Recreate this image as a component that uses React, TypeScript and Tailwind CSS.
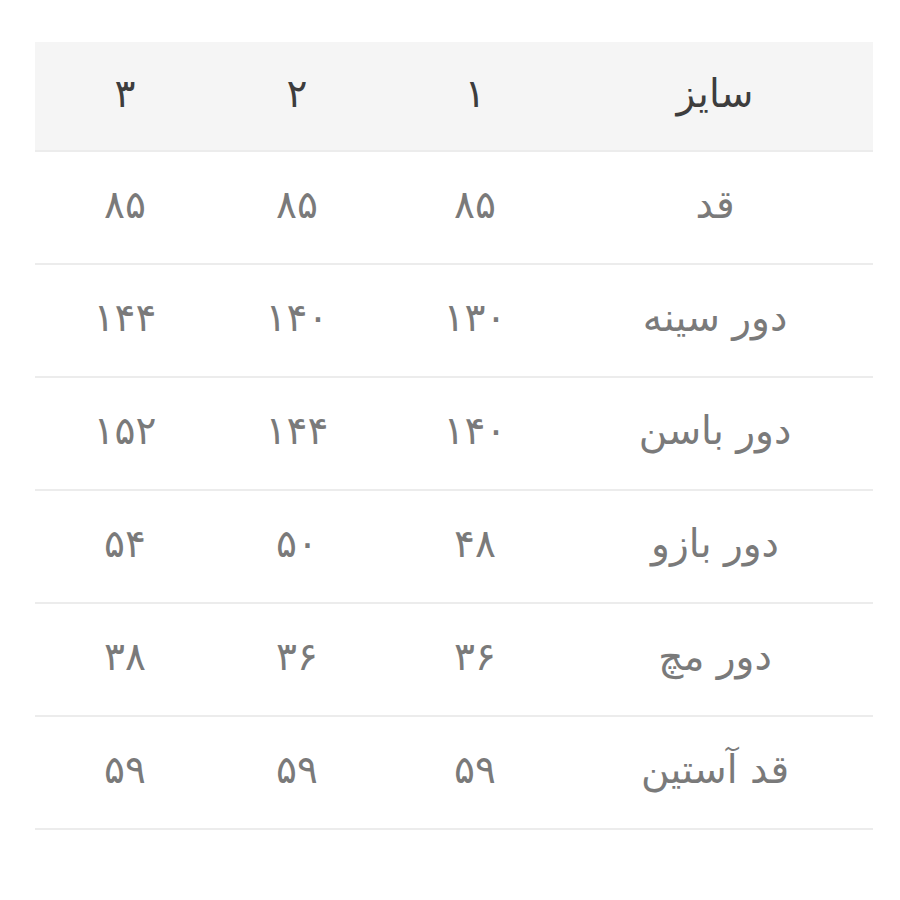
import React from 'react';

const cols = ['۱', '۲', '۳'];

const rows = [
  { label: 'قد', values: ['۸۵', '۸۵', '۸۵'] },
  { label: 'دور سینه', values: ['۱۳۰', '۱۴۰', '۱۴۴'] },
  { label: 'دور باسن', values: ['۱۴۰', '۱۴۴', '۱۵۲'] },
  { label: 'دور بازو', values: ['۴۸', '۵۰', '۵۴'] },
  { label: 'دور مچ', values: ['۳۶', '۳۶', '۳۸'] },
  { label: 'قد آستین', values: ['۵۹', '۵۹', '۵۹'] },
];

const grid = 'grid grid-cols-[316px_164px_192px_166px]';

export default function App() {
  return (
    <div className="min-h-[900px] w-[900px] bg-white pt-[42px] pl-[35px]" style={{ fontFamily: '"DejaVu Sans", sans-serif' }}>
      <div dir="rtl" className="w-[838px]">
        {/* header */}
        <div className={`${grid} h-[110px] items-center bg-[#f5f5f5] border-b-2 border-[#ececec] text-[39px] leading-none text-[#3d3d3d] pb-[6px]`}>
          <div className="text-center">سایز</div>
          {cols.map((c, i) => (
            <div key={c} className={i === 2 ? 'text-center pl-[14px]' : 'text-center'}>{c}</div>
          ))}
        </div>

        {rows.map((r) => (
          <div key={r.label} className={`${grid} h-[113px] items-center border-b-2 border-[#ececec] text-[39px] leading-none text-[#7a7a7a] pb-[6px]`}>
            <div className="text-center">{r.label}</div>
            {r.values.map((v, i) => (
              <div key={i} className={i === 2 ? 'text-center pl-[14px]' : 'text-center'}>{v}</div>
            ))}
          </div>
        ))}
      </div>
    </div>
  );
}
